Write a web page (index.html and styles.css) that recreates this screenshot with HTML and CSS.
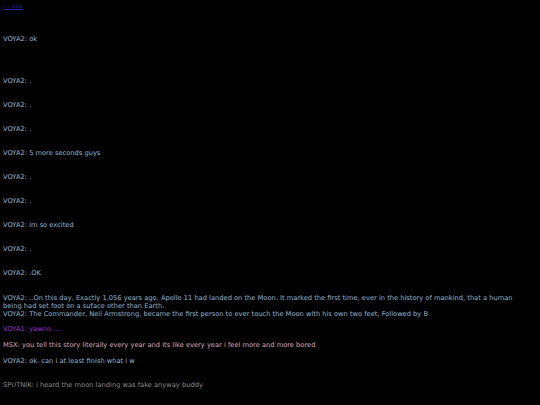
FILE: index.html
```html
<!DOCTYPE html>
<html>
<head>
<meta charset="utf-8">
<link rel="stylesheet" href="styles.css">
</head>
<body>
<div class="chat">
  <a class="back" href="#">&lt;&lt; back</a>
  <p class="msg v2 first">VOYA2: ok</p>
  <p class="msg v2 gap-big">VOYA2: .</p>
  <p class="msg v2">VOYA2: .</p>
  <p class="msg v2">VOYA2: .</p>
  <p class="msg v2">VOYA2: 5 more seconds guys</p>
  <p class="msg v2">VOYA2: .</p>
  <p class="msg v2">VOYA2: .</p>
  <p class="msg v2">VOYA2: im so excited</p>
  <p class="msg v2">VOYA2: .</p>
  <p class="msg v2">VOYA2: .OK</p>
  <p class="msg v2 long">VOYA2: ..On this day, Exactly 1,056 years ago, Apollo 11 had landed on the Moon. It marked the first time, ever in the history of mankind, that a human being had set foot on a suface other than Earth.<br>VOYA2: The Commander, Neil Armstrong, became the first person to ever touch the Moon with his own two feet, Followed by B</p>
  <p class="msg v1 tight">VOYA1: yawnn ....</p>
  <p class="msg msx tight">MSX: you tell this story literally every year and its like every year i feel more and more bored</p>
  <p class="msg v2 tight">VOYA2: ok. can i at least finish what i w</p>
  <p class="msg sput">SPUTNIK: i heard the moon landing was fake anyway buddy</p>
</div>
</body>
</html>
```
FILE: styles.css
```css
html, body {
  margin: 0;
  padding: 0;
  background: #000;
}
.chat {
  display: flex;
  flex-direction: column;
  align-items: flex-start;
  padding: 4px 3px 0 3px;
  font-family: "DejaVu Sans", Verdana, sans-serif;
  font-size: 6.7px;
  line-height: 8px;
}
.back {
  color: #2a2ab0;
  font-size: 4.5px;
  line-height: 6px;
  text-decoration: underline;
}
.msg {
  margin: 16px 0 0 0;
  max-width: 520px;
}
.first { margin-top: 25px; }
.gap-big { margin-top: 34px; }
.tight { margin-top: 8px; }
.long { margin-top: 17px; }
.v1.tight { margin-top: 7px; }
.sput { margin-top: 16px; }
.v2 { color: #8fb8d6; }
.v1 { color: #9a35d0; }
.msx { color: #d7a9bd; }
.sput { color: #8a8a8a; }
```
